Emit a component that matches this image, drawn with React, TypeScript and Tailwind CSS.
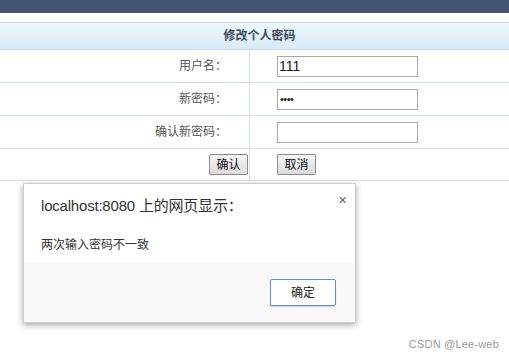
import React from 'react';

function Row({ label, children }: { label: string; children: React.ReactNode }) {
  return (
    <div className="grid grid-cols-[249px_1fr] h-[33px] border-b border-[#d3dfe9]">
      <div className="flex items-center justify-end pr-[22px] text-[12px] text-[#555]">{label}</div>
      <div className="flex items-center pl-[27px] border-l border-[#d3dfe9]">{children}</div>
    </div>
  );
}

export default function App() {
  return (
    <div className="relative w-[509px] h-[360px] bg-white overflow-hidden font-['Liberation_Sans','Noto_Sans_CJK_SC',sans-serif]">
      <div className="h-[13px] bg-[#435672]" />
      <div className="h-[9px]" />

      <div className="h-[28px] border-y border-[#c8d9e6] bg-gradient-to-b from-[#eef7fd] to-[#d8eaf6] flex items-center justify-center">
        <span className="text-[12px] font-bold text-[#3d4b5c] pl-[10px]">修改个人密码</span>
      </div>

      <Row label="用户名：">
        <div className="w-[141px] h-[21px] border border-[#a9a9a9] text-[14px] text-[#222] pl-[1px] leading-[19px]">111</div>
      </Row>
      <Row label="新密码：">
        <div className="w-[141px] h-[21px] border border-[#a9a9a9] text-[11px] text-[#222] pl-[2px] leading-[18px] tracking-[-0.5px]">••••</div>
      </Row>
      <Row label="确认新密码：">
        <div className="w-[141px] h-[21px] border border-[#a9a9a9]" />
      </Row>
      <div className="grid grid-cols-[249px_1fr] h-[32px] border-b border-[#d3dfe9]">
        <div className="flex items-center justify-end pr-[1px]">
          <button className="w-[39px] h-[21px] border border-[#8a8a8a] rounded-[2px] bg-gradient-to-b from-[#f6f6f6] to-[#dcdcdc] text-[12px] text-[#111]">确认</button>
        </div>
        <div className="flex items-center pl-[27px] border-l border-[#d3dfe9]">
          <button className="w-[39px] h-[21px] border border-[#8a8a8a] rounded-[2px] bg-gradient-to-b from-[#f6f6f6] to-[#dcdcdc] text-[12px] text-[#111]">取消</button>
        </div>
      </div>

      <div className="absolute left-[23px] top-[183px] w-[333px] h-[140px] bg-white border border-[#cfcfcf] shadow-[0_2px_6px_rgba(0,0,0,0.35)] flex flex-col">
        <div className="flex items-start justify-between pl-[17px] pr-[8px] pt-[11px]">
          <span className="text-[15px] text-[#333] tracking-[-0.2px]">localhost:8080 上的网页显示：</span>
          <span className="text-[15px] text-[#666] leading-[14px] -mt-[2px]">×</span>
        </div>
        <div className="pl-[17px] mt-[18px] text-[12px] text-[#333]">两次输入密码不一致</div>
        <div className="mt-auto h-[59px] bg-[#f9f9f9] flex items-center justify-end pr-[19px]">
          <button className="w-[66px] h-[27px] bg-white border border-[#5f8fd0] rounded-[2px] text-[12px] text-[#222] shadow-[0_1px_1px_rgba(0,0,0,0.15)]">确定</button>
        </div>
      </div>

      <div className="absolute right-[10px] bottom-[8px] text-[11px] text-[#9a9a9a] tracking-[0.2px]">CSDN @Lee-web</div>
    </div>
  );
}
